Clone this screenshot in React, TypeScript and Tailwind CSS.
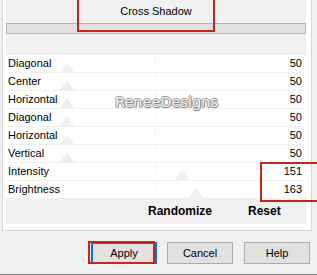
const rows = [
  { label: "Diagonal", value: 50 },
  { label: "Center", value: 50 },
  { label: "Horizontal", value: 50 },
  { label: "Diagonal", value: 50 },
  { label: "Horizontal", value: 50 },
  { label: "Vertical", value: 50 },
  { label: "Intensity", value: 151 },
  { label: "Brightness", value: 163 },
];

function Thumb({ value }: { value: number }) {
  // track runs from x=4 to x=295 inside the row
  const center = 4 + (value * 291) / 255;
  return (
    <svg
      className="absolute bottom-0"
      style={{ left: center - 7 }}
      width="14"
      height="10"
      viewBox="0 0 14 10"
    >
      <path d="M7 0 L14 10 L0 10 Z" fill="#efefef" />
    </svg>
  );
}

function SliderRow({ label, value }: { label: string; value: number }) {
  return (
    <div className="relative flex h-[17px] items-center justify-between bg-white pl-[2px] pr-[4px] text-[11px] leading-[17px]">
      <div className="absolute left-[149px] top-[1px] h-[8px] w-px bg-[#f1f1f1]" />
      <Thumb value={value} />
      <span className="relative">{label}</span>
      <span className="relative">{value}</span>
    </div>
  );
}

export default function App() {
  return (
    <div className="relative h-[275px] w-[317px] overflow-hidden border-b border-[#8c8c8c] bg-[#f0f0f0] font-['Liberation_Sans',Arial,sans-serif] text-black">
      <div className="ml-[2px] h-[231px] w-[310px] border border-t-0 border-[#d6d6d6] bg-white px-[3px]">
        <div className="flex h-[224px] w-[300px] flex-col bg-[#f0f0f0]">
          <div className="flex h-[23px] items-center justify-center text-[11px]">
            Cross Shadow
          </div>
          <div className="h-[11px] border border-[#b4b4b4] bg-[#e2e2e2]" />
          <div className="h-[21px]" />
          <div className="flex flex-col gap-px">
            {rows.map((row, i) => (
              <SliderRow key={i} label={row.label} value={row.value} />
            ))}
          </div>
          <div className="flex flex-1 items-center gap-[36px] pl-[142px] text-[12px] font-bold">
            <span>Randomize</span>
            <span>Reset</span>
          </div>
        </div>
      </div>

      <div className="mt-[11px] flex items-center text-[11px]">
        <button className="ml-[91px] h-[22px] w-[66px] border-2 border-[#0078d7] bg-[#e1e1e1]">
          Apply
        </button>
        <button className="ml-[10px] h-[22px] w-[66px] border border-[#adadad] bg-[#e1e1e1]">
          Cancel
        </button>
        <button className="ml-[11px] h-[22px] w-[66px] border border-[#adadad] bg-[#e1e1e1]">
          Help
        </button>
      </div>

      <div className="pointer-events-none absolute left-[115px] top-[95px] font-['DejaVu_Sans',sans-serif] text-[14.5px] leading-none text-[#f2f2f2] [text-shadow:-1px_0_0_#9a9a9a,0_-1px_0_#9a9a9a,1px_0_0_#8a8a8a,0_1px_0_#8a8a8a,1px_1px_1px_#b0b0b0]">
        ReneeDesigns
      </div>

      <div className="absolute left-[77px] top-[-3px] h-[35px] w-[138px] border-2 border-[#c4281c]" />
      <div className="absolute left-[260px] top-[162px] h-[40px] w-[80px] border-2 border-[#c4281c]" />
      <div className="absolute left-[88px] top-[241px] h-[23px] w-[67px] border-2 border-[#c4281c]" />
    </div>
  );
}
